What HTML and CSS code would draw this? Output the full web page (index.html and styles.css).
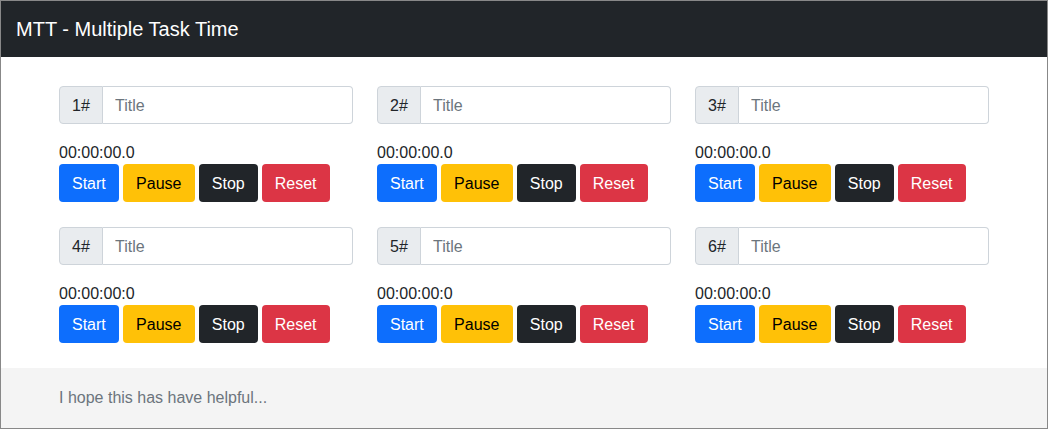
FILE: index.html
```html
<!DOCTYPE html>
<html lang="en">
<head>
    <meta charset="UTF-8">
    <meta name="viewport" content="width=device-width, initial-scale=1.0">
    <title>MTT - Multiple Task Time</title>
    <link rel="stylesheet" href="styles.css">
</head>
<body>
    <div class="frame">
        <nav class="navbar">MTT - Multiple Task Time</nav>

        <main class="timers">
            <div class="timer">
                <div class="input-group"><span class="addon">1#</span><input type="text" placeholder="Title"></div>
                <div class="clock">00:00:00.0</div>
                <div class="buttons">
                    <button class="btn btn-start">Start</button>
                    <button class="btn btn-pause">Pause</button>
                    <button class="btn btn-stop">Stop</button>
                    <button class="btn btn-reset">Reset</button>
                </div>
            </div>
            <div class="timer">
                <div class="input-group"><span class="addon">2#</span><input type="text" placeholder="Title"></div>
                <div class="clock">00:00:00.0</div>
                <div class="buttons">
                    <button class="btn btn-start">Start</button>
                    <button class="btn btn-pause">Pause</button>
                    <button class="btn btn-stop">Stop</button>
                    <button class="btn btn-reset">Reset</button>
                </div>
            </div>
            <div class="timer">
                <div class="input-group"><span class="addon">3#</span><input type="text" placeholder="Title"></div>
                <div class="clock">00:00:00.0</div>
                <div class="buttons">
                    <button class="btn btn-start">Start</button>
                    <button class="btn btn-pause">Pause</button>
                    <button class="btn btn-stop">Stop</button>
                    <button class="btn btn-reset">Reset</button>
                </div>
            </div>
            <div class="timer">
                <div class="input-group"><span class="addon">4#</span><input type="text" placeholder="Title"></div>
                <div class="clock">00:00:00:0</div>
                <div class="buttons">
                    <button class="btn btn-start">Start</button>
                    <button class="btn btn-pause">Pause</button>
                    <button class="btn btn-stop">Stop</button>
                    <button class="btn btn-reset">Reset</button>
                </div>
            </div>
            <div class="timer">
                <div class="input-group"><span class="addon">5#</span><input type="text" placeholder="Title"></div>
                <div class="clock">00:00:00:0</div>
                <div class="buttons">
                    <button class="btn btn-start">Start</button>
                    <button class="btn btn-pause">Pause</button>
                    <button class="btn btn-stop">Stop</button>
                    <button class="btn btn-reset">Reset</button>
                </div>
            </div>
            <div class="timer">
                <div class="input-group"><span class="addon">6#</span><input type="text" placeholder="Title"></div>
                <div class="clock">00:00:00:0</div>
                <div class="buttons">
                    <button class="btn btn-start">Start</button>
                    <button class="btn btn-pause">Pause</button>
                    <button class="btn btn-stop">Stop</button>
                    <button class="btn btn-reset">Reset</button>
                </div>
            </div>
        </main>

        <footer class="footer">I hope this has have helpful...</footer>
    </div>
</body>
</html>
```

FILE: styles.css
```css
* {
    box-sizing: border-box;
}
body {
    margin: 0;
    font-family: "Liberation Sans", Arial, sans-serif;
    font-size: 16px;
    line-height: 24px;
    color: #212529;
    background: #fff;
}
.frame {
    height: 429px;
    border: 1px solid #888;
    display: flex;
    flex-direction: column;
}
.navbar {
    background: #212529;
    color: #fff;
    height: 56px;
    padding: 0 15px;
    font-size: 20px;
    line-height: 56px;
}
.timers {
    display: grid;
    grid-template-columns: repeat(3, 294px);
    column-gap: 24px;
    row-gap: 25px;
    padding: 29px 0 25px 58px;
}
.input-group {
    display: flex;
    height: 38px;
}
.addon {
    width: 44px;
    background: #e9ecef;
    border: 1px solid #ced4da;
    border-radius: 4px 0 0 4px;
    text-align: center;
    line-height: 38px;
}
.input-group input {
    flex: 1;
    min-width: 0;
    border: 1px solid #ced4da;
    border-left: none;
    border-radius: 0 4px 4px 0;
    padding: 2px 12px 0;
    font-family: inherit;
    font-size: 16px;
    color: #212529;
}
.input-group input::placeholder {
    color: #6c757d;
}
.clock {
    margin-top: 16px;
    height: 24px;
    padding-top: 1px;
}
.buttons {
    display: flex;
    gap: 4px;
}
.btn {
    height: 38px;
    padding: 2px 12px 0;
    border: 1px solid transparent;
    border-radius: 4px;
    font-family: inherit;
    font-size: 16px;
    color: #fff;
    cursor: pointer;
}
.btn-start { background: #0d6efd; }
.btn-pause { background: #ffc107; color: #000; min-width: 72px; }
.btn-stop { background: #212529; }
.btn-reset { background: #dc3545; }
.footer {
    flex: 1;
    background: #f4f4f4;
    color: #6c757d;
    padding-left: 58px;
    line-height: 59px;
}
```
